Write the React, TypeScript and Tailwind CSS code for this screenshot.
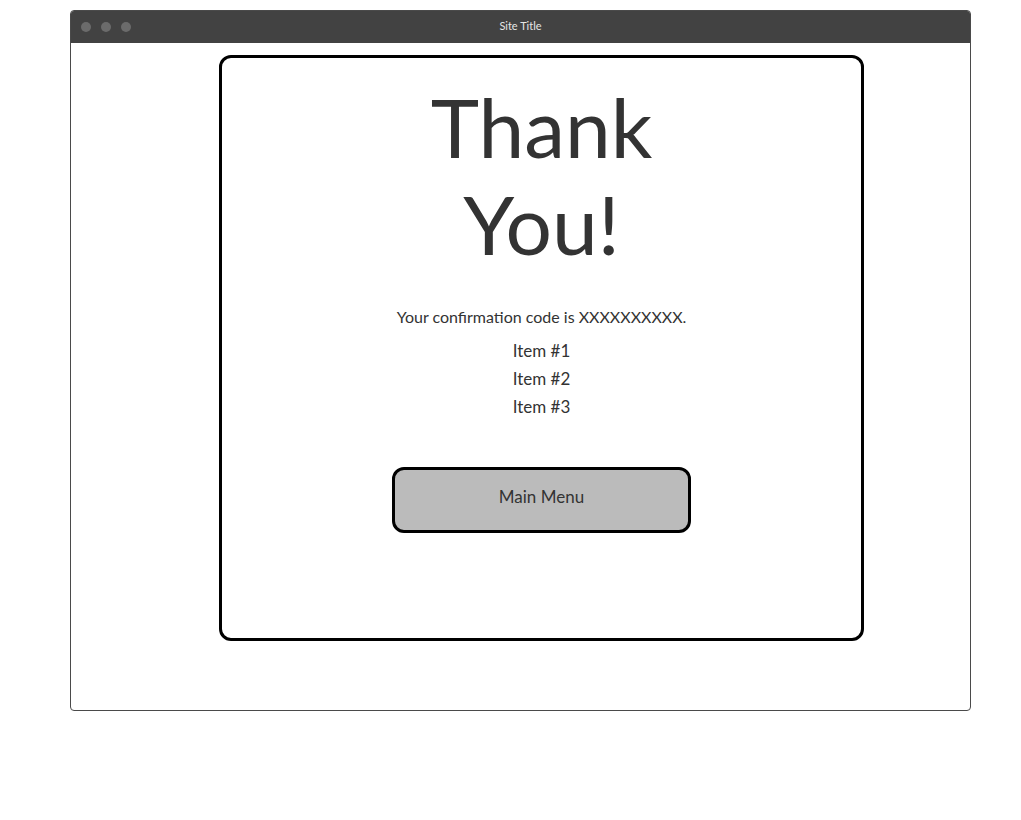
export default function App() {
  const items = ["Item #1", "Item #2", "Item #3"];

  return (
    <div className="min-h-screen bg-white pt-[10px] pl-[70px]" style={{ fontFamily: "Lato, 'Open Sans', sans-serif" }}>
      {/* window frame */}
      <div className="w-[901px] h-[701px] border border-[#4a4a4a] rounded-[4px] overflow-hidden flex flex-col">
        <div className="h-[32px] bg-[#424242] flex items-center relative shrink-0">
          <div className="flex gap-[10px] pl-[10px]">
            <span className="w-[10px] h-[10px] rounded-full bg-[#6b6b6b]" />
            <span className="w-[10px] h-[10px] rounded-full bg-[#6b6b6b]" />
            <span className="w-[10px] h-[10px] rounded-full bg-[#6b6b6b]" />
          </div>
          <div className="absolute inset-0 flex items-center justify-center text-[11px] text-[#e6e6e6] pb-[2px]">Site Title</div>
        </div>

        {/* page body */}
        <div className="flex-1 pt-[12px] pl-[148px]">
          <div className="w-[645px] h-[586px] border-[3px] border-black rounded-[12px] flex flex-col items-center text-[#333333]">
            <h1 className="text-[82px] leading-[97px] text-center pt-[20px]">
              Thank
              <br />
              You!
            </h1>
            <p className="text-[16px] leading-[28px] mt-[31px]">Your confirmation code is XXXXXXXXXX.</p>
            <ul className="mt-[6px] flex flex-col items-center">
              {items.map((it) => (
                <li key={it} className="text-[17px] leading-[28px]">{it}</li>
              ))}
            </ul>
            <button className="mt-[46px] w-[299px] h-[66px] border-[3px] border-black rounded-[12px] bg-[#bbbbbb] text-[17px] text-[#333333] pb-[6px]">
              Main Menu
            </button>
          </div>
        </div>
      </div>
    </div>
  );
}
